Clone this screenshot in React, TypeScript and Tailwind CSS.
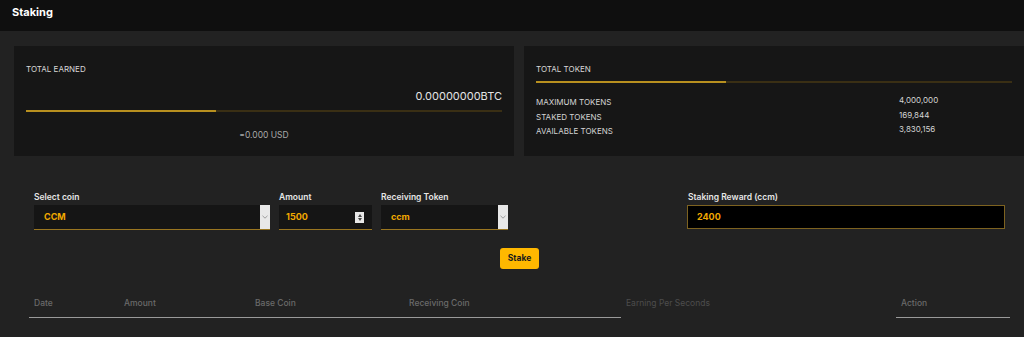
import React from "react";

const font = { fontFamily: "Inter, 'Noto Sans', sans-serif" };

function Bar({ pct }: { pct: number }) {
  return (
    <div className="h-[2px] w-full bg-[#3a2f14]">
      <div className="h-full bg-[#b8901f]" style={{ width: `${pct}%` }} />
    </div>
  );
}

function SelectBox({ value, width }: { value: string; width: string }) {
  return (
    <div className={`flex h-[25px] ${width} items-stretch border-b border-[#9a7620] bg-[#151515]`}>
      <div className="flex flex-1 items-center pl-[10px] text-[9px] font-bold text-[#f2a900]">{value}</div>
      <div className="flex w-[10px] items-center justify-center bg-[#e8e8e8]">
        <svg width="6" height="4" viewBox="0 0 6 4">
          <path d="M0.5 0.8 L3 3.2 L5.5 0.8" fill="none" stroke="#888" strokeWidth="0.8" />
        </svg>
      </div>
    </div>
  );
}

export default function App() {
  const rows = [
    ["MAXIMUM TOKENS", "4,000,000"],
    ["STAKED TOKENS", "169,844"],
    ["AVAILABLE TOKENS", "3,830,156"],
  ];
  const cols = [
    { label: "Date", w: "w-[90px]", line: true, dim: false },
    { label: "Amount", w: "w-[131px]", line: true, dim: false },
    { label: "Base Coin", w: "w-[154px]", line: true, dim: false },
    { label: "Receiving Coin", w: "w-[217px]", line: true, dim: false },
    { label: "Earning Per Seconds", w: "w-[275px]", line: false, dim: true },
    { label: "Action", w: "w-[114px]", line: true, dim: false },
  ];

  return (
    <div className="h-[337px] w-[1024px] overflow-hidden bg-[#222222]" style={font}>
      <div className="flex h-[31px] items-center bg-[#0f0f0f] pl-3 pb-[6px] text-[11px] font-bold text-white">
        Staking
      </div>

      <div className="mt-[15px] grid grid-cols-2 gap-[10px] pl-[14px]">
        <div className="h-[110px] bg-[#161616] px-3 pt-[18px]">
          <div className="text-[8px] leading-[10px] text-[#d8d8d8]">TOTAL EARNED</div>
          <div className="mt-[14px] text-right text-[11px] leading-[16px] text-[#e4e4e4]">0.00000000BTC</div>
          <div className="mt-[6px]">
            <Bar pct={40} />
          </div>
          <div className="mt-[17px] text-center text-[8.5px] leading-[12px] text-[#a8a8a8]">=0.000 USD</div>
        </div>
        <div className="h-[110px] bg-[#161616] px-3 pt-[18px]">
          <div className="text-[8px] leading-[10px] text-[#d8d8d8]">TOTAL TOKEN</div>
          <div className="mt-[7px]">
            <Bar pct={40} />
          </div>
          <div className="mt-[12px]">
            {rows.map(([k, v]) => (
              <div key={k} className="flex text-[8px] leading-[14.5px] text-[#d4d4d4]">
                <div className="w-[363px]">{k}</div>
                <div className="-translate-y-[2px]">{v}</div>
              </div>
            ))}
          </div>
        </div>
      </div>

      <div className="mt-[35px] flex pl-[34px]">
        <div className="mr-[9px]">
          <div className="mb-[2px] text-[8.5px] font-semibold leading-[12px] text-[#e6e6e6]">Select coin</div>
          <SelectBox value="CCM" width="w-[236px]" />
        </div>
        <div className="mr-[9px]">
          <div className="mb-[2px] text-[8.5px] font-semibold leading-[12px] text-[#e6e6e6]">Amount</div>
          <div className="flex h-[25px] w-[93px] items-center border-b border-[#9a7620] bg-[#151515] pl-[7px] pr-[8px]">
            <div className="flex-1 text-[9px] font-bold text-[#f2a900]">1500</div>
            <div className="flex h-[11px] w-[9px] flex-col items-center justify-center gap-[1px] bg-[#e8e8e8]">
              <div className="h-0 w-0 border-x-[2px] border-b-[3px] border-x-transparent border-b-[#444]" />
              <div className="h-0 w-0 border-x-[2px] border-t-[3px] border-x-transparent border-t-[#444]" />
            </div>
          </div>
        </div>
        <div>
          <div className="mb-[2px] text-[8.5px] font-semibold leading-[12px] text-[#e6e6e6]">Receiving Token</div>
          <SelectBox value="ccm" width="w-[127px]" />
        </div>
        <div className="ml-[179px]">
          <div className="mb-[2px] pl-[1px] text-[8.5px] font-semibold leading-[12px] text-[#e6e6e6]">Staking Reward (ccm)</div>
          <div className="flex h-[24px] w-[318px] items-center border border-[#7d6220] bg-black pl-[9px] text-[9px] font-bold text-[#f2a900]">
            2400
          </div>
        </div>
      </div>

      <div className="pl-[29px] pr-[14px]">
        <div className="mt-[18px] flex justify-center">
          <button className="h-[21px] w-[39px] rounded-[3px] bg-[#ffb800] text-[8.5px] font-bold text-[#1a1a1a]">
            Stake
          </button>
        </div>
        <div className="mt-[28px] flex">
          {cols.map((c) => (
            <div
              key={c.label}
              className={`${c.w} pb-[8px] pl-[5px] text-[8.5px] leading-[12px] ${
                c.line ? "border-b border-[#9a9a9a]" : "border-b border-transparent"
              } ${c.dim ? "font-normal text-[#4d4d4d]" : "font-medium text-[#6a6a6a]"}`}
            >
              {c.label}
            </div>
          ))}
        </div>
      </div>
    </div>
  );
}
